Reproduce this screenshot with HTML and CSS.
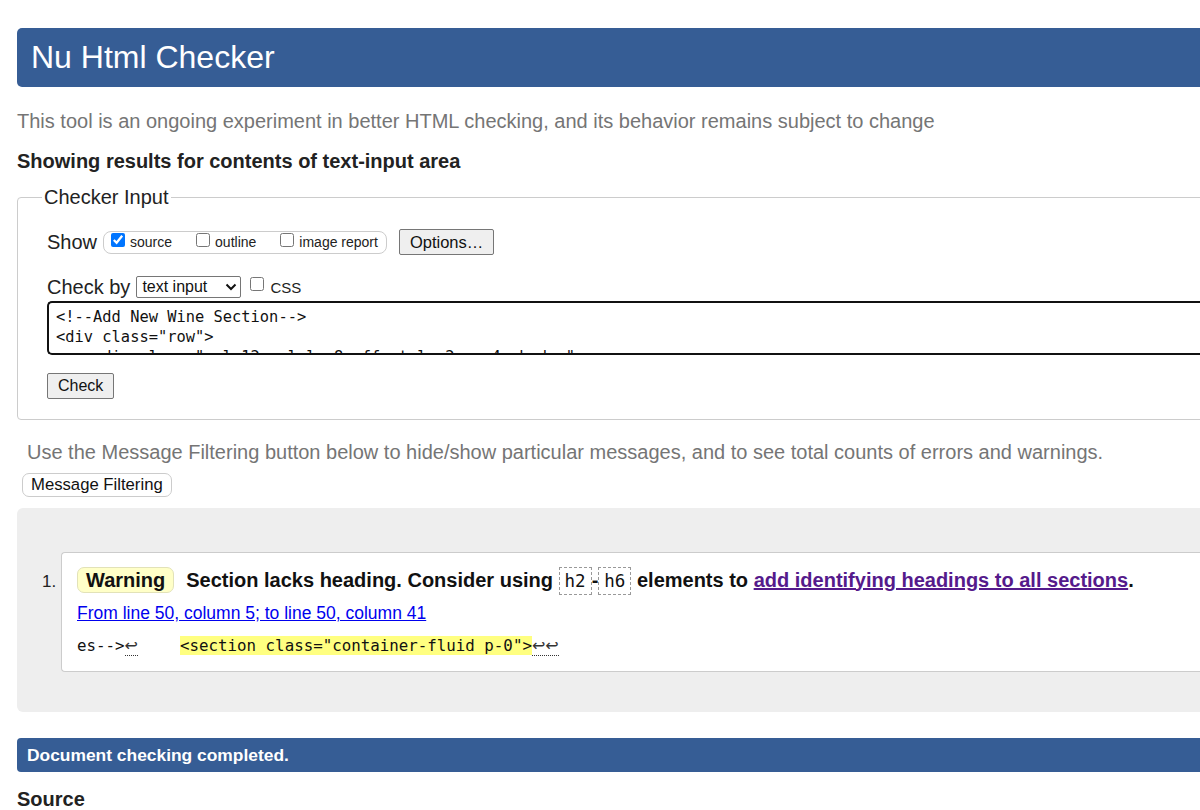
FILE: index.html
```html
<!DOCTYPE html>
<html lang="en">
<head>
<meta charset="utf-8">
<title>Nu Html Checker</title>
<link rel="stylesheet" href="styles.css">
</head>
<body>
<div class="page">
  <h1 class="topbar">Nu Html Checker</h1>
  <p class="tagline">This tool is an ongoing experiment in better HTML checking, and its behavior remains subject to change</p>
  <p class="showing">Showing results for contents of text-input area</p>

  <fieldset class="checker">
    <legend>Checker Input</legend>
    <div class="row row-show">
      <span class="lbl">Show</span>
      <span class="opts">
        <label class="opt"><input type="checkbox" checked> source</label>
        <label class="opt"><input type="checkbox"> outline</label>
        <label class="opt"><input type="checkbox"> image report</label>
      </span>
      <button class="btn btn-options" type="button">Options…</button>
    </div>
    <div class="row row-by">
      <span class="lbl">Check by</span>
      <span class="select">text input <svg class="chev" width="12" height="8" viewBox="0 0 12 8"><path d="M1.5 1.5 L6 6 L10.5 1.5" fill="none" stroke="#111" stroke-width="2"/></svg></span>
      <label class="opt css"><input type="checkbox"> CSS</label>
    </div>
    <div class="textarea"><div>&lt;!--Add New Wine Section--&gt;</div><div>&lt;div class="row"&gt;</div><div>    &lt;div class="col-12 col-lg-8 offset-lg-2 mx-4 shadow"</div></div>
    <button class="btn btn-check" type="button">Check</button>
  </fieldset>

  <p class="hint">Use the Message Filtering button below to hide/show particular messages, and to see total counts of errors and warnings.</p>
  <button class="btn btn-filter" type="button">Message Filtering</button>

  <div class="results">
    <ol class="msgs">
      <li class="msg">
        <p class="msg-line"><span class="badge">Warning</span> <span class="msg-text">Section lacks heading. Consider using <code class="el">h2</code>-<code class="el">h6</code> elements to <a class="visited" href="#">add identifying headings to all sections</a>.</span></p>
        <p class="loc"><a href="#">From line 50, column 5; to line 50, column 41</a></p>
        <p class="extract"><code>es--&gt;<span class="lf">↩</span>    <b class="hl">&lt;section class="container-fluid p-0"&gt;</b><span class="lf">↩↩</span></code></p>
      </li>
    </ol>
  </div>

  <p class="done">Document checking completed.</p>
  <h2 class="source">Source</h2>
</div>
</body>
</html>
```

FILE: styles.css
```css
html { overflow: hidden; }
body {
  margin: 0;
  font-family: "Liberation Sans", Arial, sans-serif;
  color: #111;
  background: #fff;
}
.page {
  width: 1260px;
  padding-left: 17px;
}
.topbar {
  margin: 28px 0 0;
  height: 59px;
  line-height: 59px;
  padding-left: 14px;
  background: #365d95;
  color: #fff;
  font-size: 32px;
  font-weight: normal;
  border-radius: 5px 0 0 5px;
}
.tagline {
  margin: 22px 0 0;
  font-size: 20px;
  line-height: 24px;
  color: #757575;
}
.showing {
  margin: 16px 0 0;
  font-size: 20px;
  line-height: 24px;
  font-weight: bold;
  color: #222;
}
.checker {
  margin: 12px 0 0;
  border: 1px solid #ccc;
  border-radius: 4px;
  padding: 0 0 20px 29px;
  min-width: 0;
}
.checker legend {
  font-size: 20px;
  line-height: 24px;
  padding: 0 2px;
  margin-left: -5px;
  color: #222;
}
.row {
  display: flex;
  align-items: center;
}
.row-show { margin-top: 20px; height: 26px; }
.row-by { margin-top: 21px; height: 22px; }
.lbl {
  font-size: 20px;
  color: #222;
  margin-right: 6px;
}
.opts {
  display: flex;
  align-items: center;
  gap: 24px;
  height: 21px;
  border: 1px solid #ccc;
  border-radius: 8px;
  padding: 0 8px 0 7px;
  margin-right: 12px;
}
.opt {
  display: flex;
  align-items: center;
  font-size: 14px;
  color: #222;
}
.opt input {
  margin: 0 5px 0 0;
  width: 14px;
  height: 14px;
  position: relative;
  top: -2px;
}
.css { font-size: 15px; margin-left: 9px; }
.css input { top: -3px; margin-right: 6px; }
.btn {
  font-family: "Liberation Sans", Arial, sans-serif;
  font-size: 16px;
  color: #111;
  background: #efefef;
  border: 1px solid #767676;
  border-radius: 2px;
  padding: 0 10px;
}
.btn-options { height: 26px; padding: 0 10px; font-size: 16.5px; }
.select {
  display: flex;
  align-items: center;
  justify-content: space-between;
  width: 96px;
  height: 20px;
  border: 1px solid #767676;
  border-radius: 2px;
  padding: 0 2px 0 5px;
  font-size: 16px;
  background: #fff;
}
.chev { margin-right: 1px; }
.textarea {
  margin-top: 3px;
  height: 46px;
  overflow: hidden;
  border: 2px solid #111;
  border-right: none;
  border-radius: 5px 0 0 5px;
  padding: 4px 0 0 7px;
  font-family: "DejaVu Sans Mono", Consolas, monospace;
  font-size: 15.4px;
  line-height: 20px;
  white-space: pre;
  color: #111;
}
.btn-check {
  display: block;
  margin-top: 18px;
  height: 26px;
  padding: 0 10px;
}
.hint {
  margin: 20px 0 0 10px;
  font-size: 20px;
  line-height: 24px;
  color: #757575;
}
.btn-filter {
  display: block;
  margin: 9px 0 0 5px;
  height: 24px;
  padding: 0 8px;
  font-size: 16.7px;
  background: #fff;
  border: 1px solid #ccc;
  border-radius: 7px;
}
.results {
  margin-top: 11px;
  background: #eee;
  border-radius: 6px 0 0 6px;
  padding: 44px 0 40px 44px;
}
.msgs {
  margin: 0;
  padding: 0;
  list-style: decimal;
}
.msg {
  background: #fff;
  border: 1px solid #ccc;
  border-right: none;
  border-radius: 4px 0 0 4px;
  padding: 13px 0 14px 15px;
  font-size: 18px;
}
.msg::marker {
  font-size: 17px;
  color: #222;
}
.msg-line {
  margin: 0;
  height: 28px;
  display: flex;
  align-items: center;
  font-weight: bold;
  font-size: 20px;
}
.badge {
  display: inline-block;
  background: #ffffc8;
  border: 1px solid #e2e2b8;
  border-radius: 7px;
  padding: 0 8px;
  height: 24px;
  line-height: 24px;
  margin-right: 12px;
}
.msg-text { white-space: nowrap; }
.el {
  font-family: "DejaVu Sans Mono", Consolas, monospace;
  font-weight: normal;
  font-size: 17.5px;
  border: 1px dashed #999;
  padding: 3px 5px;
  margin: 0;
}
a { color: #0000ee; }
a.visited { color: #551a8b; }
.loc {
  margin: 9px 0 0;
  font-size: 17.5px;
  line-height: 20px;
}
.extract {
  margin: 11px 0 0;
  line-height: 22px;
}
.extract code {
  font-family: "DejaVu Sans Mono", Consolas, monospace;
  font-size: 15.8px;
  white-space: pre;
}
.hl {
  font-weight: normal;
  background: #ffff80;
  margin-left: 4px;
}
.lf {
  font-family: "DejaVu Sans", sans-serif;
  font-size: 16px;
  color: #333;
  border-bottom: 1px dotted #333;
}
.done {
  margin: 26px 0 0;
  height: 34px;
  line-height: 34px;
  padding-left: 10px;
  background: #365d95;
  color: #fff;
  font-weight: bold;
  font-size: 17.4px;
  border-radius: 4px 0 0 4px;
}
.source {
  margin: 16px 0 0;
  font-size: 20px;
  color: #222;
}
```
